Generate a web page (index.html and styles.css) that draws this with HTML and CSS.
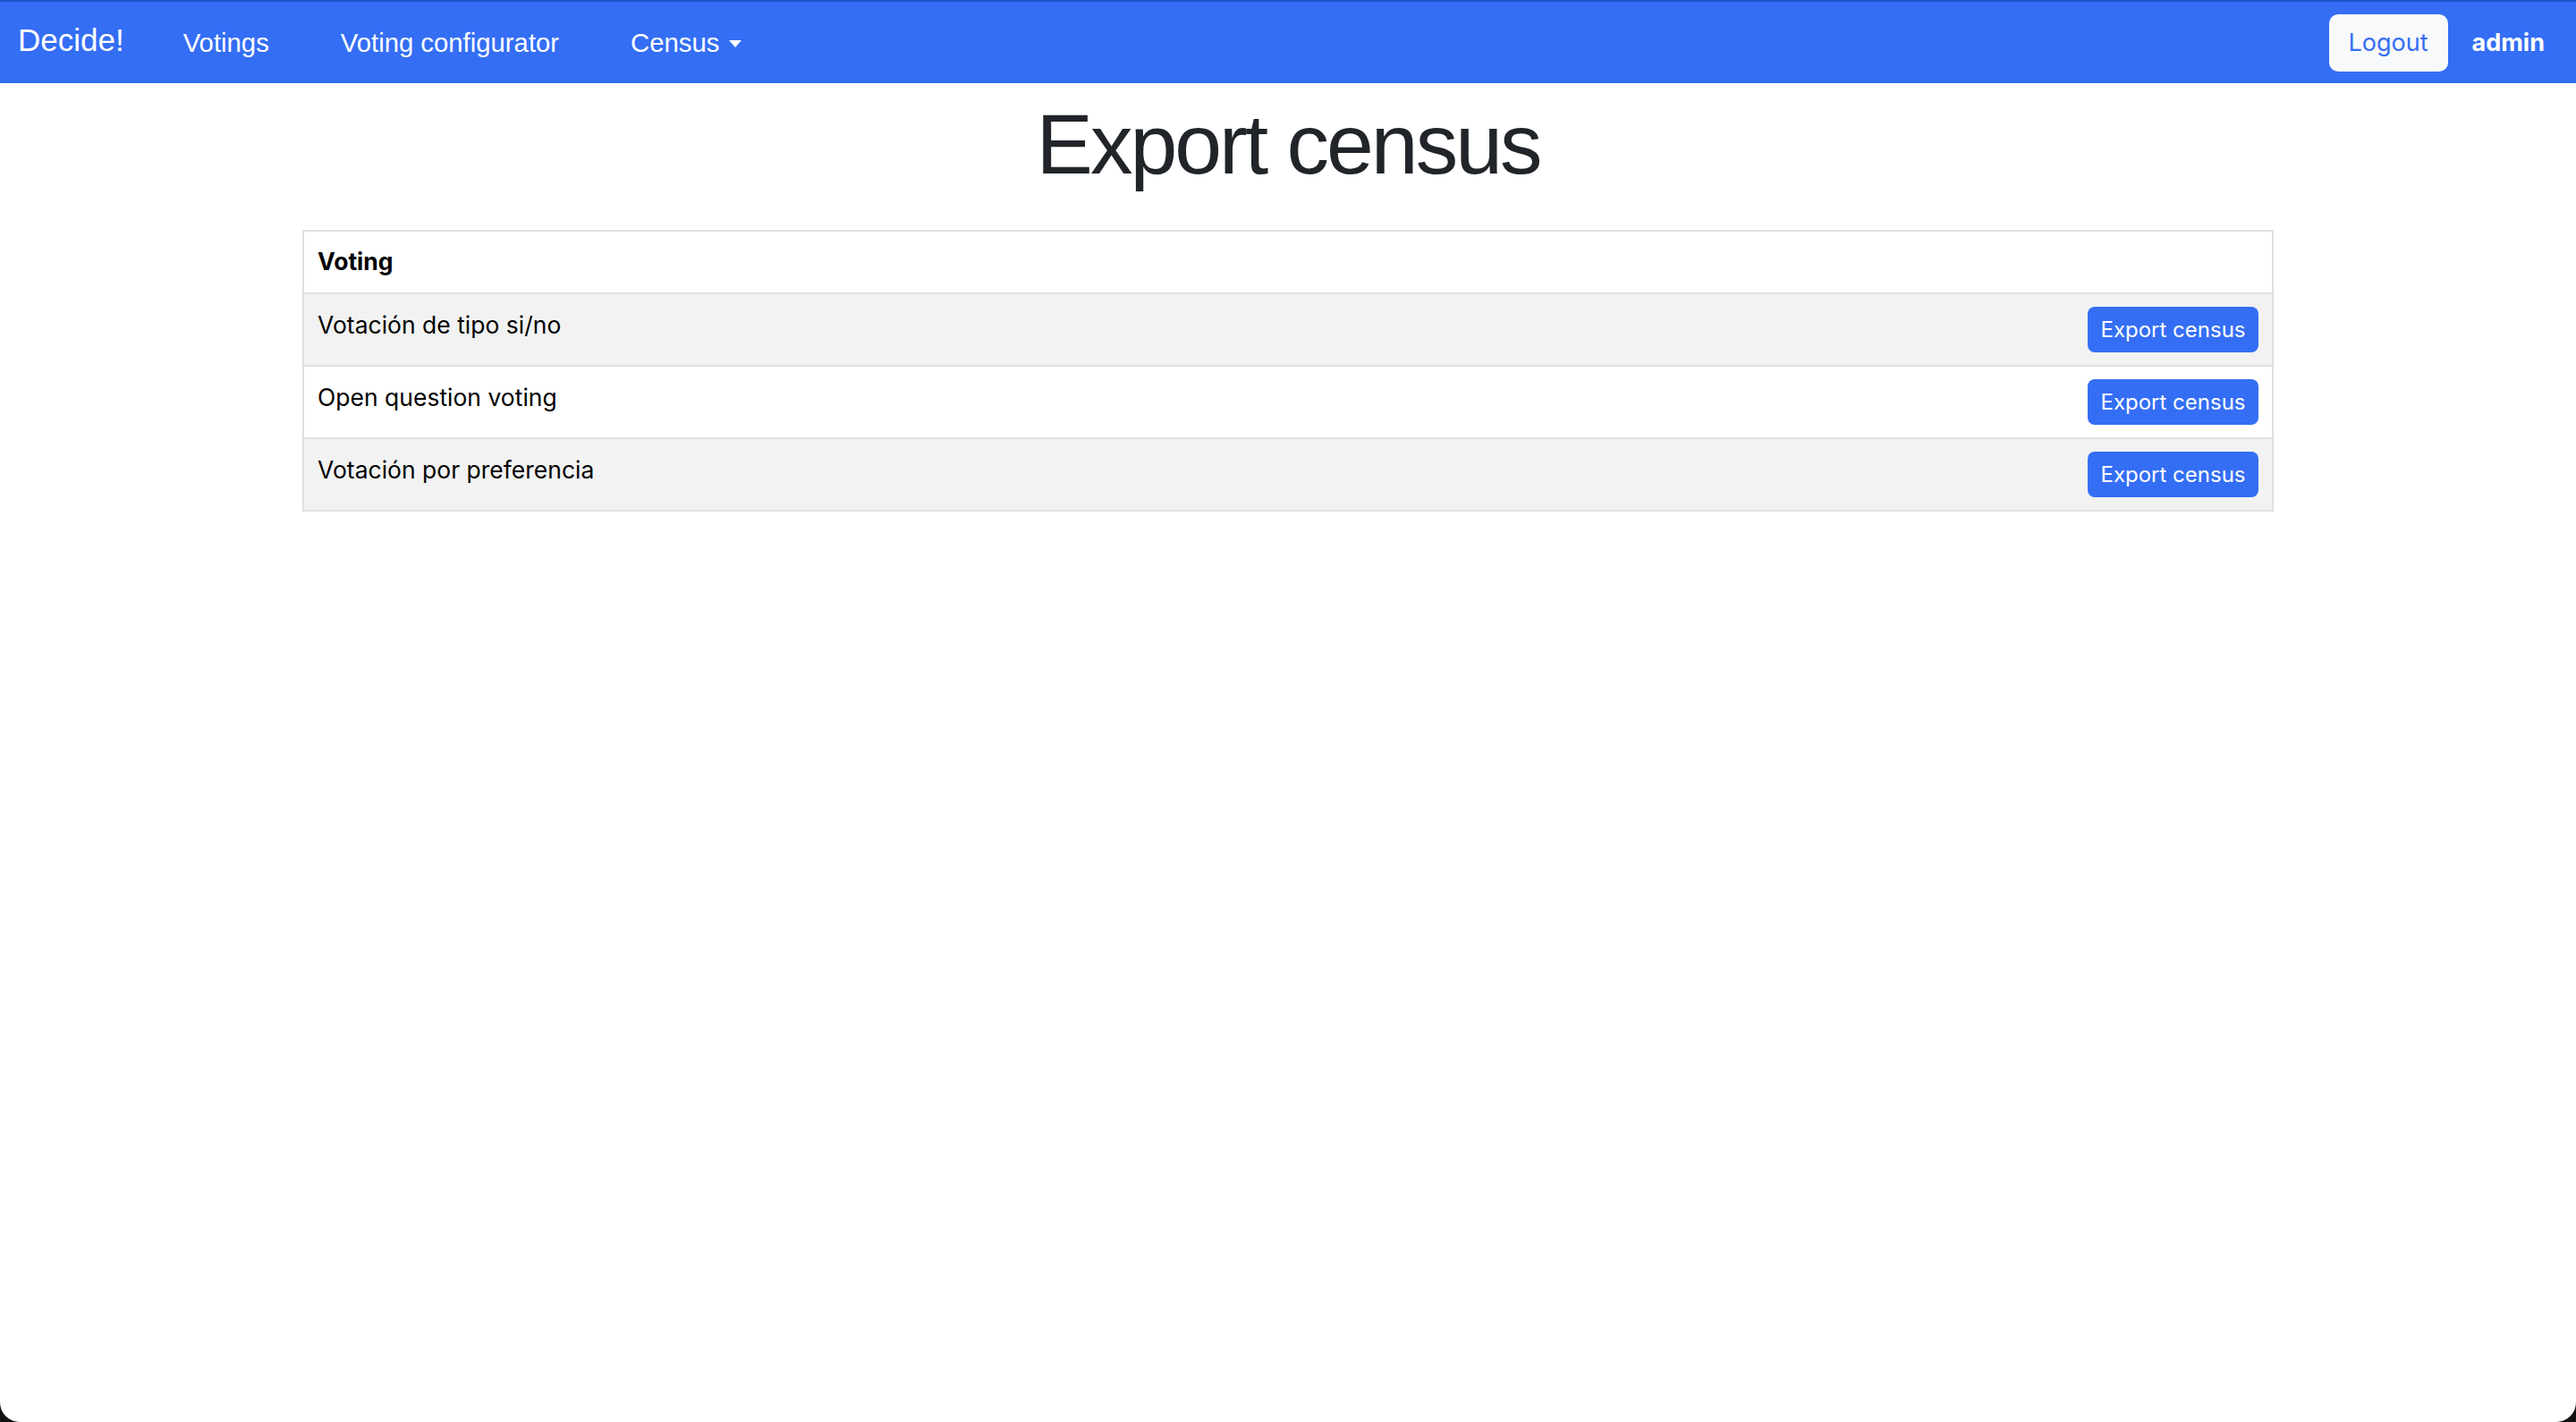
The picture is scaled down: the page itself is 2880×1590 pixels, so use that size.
FILE: index.html
```html
<!DOCTYPE html>
<html lang="es">
<head>
<meta charset="utf-8">
<title>Export census</title>
<link rel="stylesheet" href="styles.css">
</head>
<body>
<div class="window">
  <nav class="navbar">
    <div class="nav-left">
      <a class="brand" href="#">Decide!</a>
      <a class="nav-link" href="#">Votings</a>
      <a class="nav-link" href="#">Voting configurator</a>
      <a class="nav-link" href="#">Census<span class="caret"></span></a>
    </div>
    <div class="nav-right">
      <button class="btn-logout">Logout</button>
      <span class="user">admin</span>
    </div>
  </nav>
  <main class="content">
    <h1 class="title">Export census</h1>
    <table class="table">
      <thead>
        <tr><th>Voting</th><th></th></tr>
      </thead>
      <tbody>
        <tr><td>Votación de tipo si/no</td><td class="actions"><button class="btn-export">Export census</button></td></tr>
        <tr><td>Open question voting</td><td class="actions"><button class="btn-export">Export census</button></td></tr>
        <tr><td>Votación por preferencia</td><td class="actions"><button class="btn-export">Export census</button></td></tr>
      </tbody>
    </table>
  </main>
</div>
</body>
</html>
```

FILE: styles.css
```css
html {
  background: #111;
}
body {
  margin: 0;
}
.window {
  background: #fff;
  min-height: 1590px;
  border-radius: 0 0 22px 22px;
  overflow: hidden;
}
.navbar {
  box-sizing: border-box;
  height: 93px;
  border-top: 2px solid #1d52cc;
  background: #346ef4;
  display: flex;
  align-items: center;
  justify-content: space-between;
  padding: 0 35px 0 20px;
}
.nav-left, .nav-right {
  display: flex;
  align-items: center;
}
.brand {
  font-family: "Liberation Sans", Arial, sans-serif;
  font-size: 35px;
  line-height: 40px;
  color: #fff;
  text-decoration: none;
  margin-right: 26px;
  padding-bottom: 5px;
}
.nav-link {
  font-family: "Liberation Sans", Arial, sans-serif;
  font-size: 29.3px;
  line-height: 40px;
  color: #fff;
  text-decoration: none;
  padding: 0 40px;
  display: flex;
  align-items: center;
}
.caret {
  display: inline-block;
  width: 0;
  height: 0;
  margin-left: 11px;
  margin-top: 2px;
  border-top: 8px solid #fff;
  border-left: 7.5px solid transparent;
  border-right: 7.5px solid transparent;
}
.btn-logout {
  box-sizing: border-box;
  width: 133px;
  height: 64px;
  border: none;
  border-radius: 10px;
  background: #f8f9fa;
  color: #346ef4;
  font-family: Inter, "Noto Sans", sans-serif;
  font-size: 27px;
  padding: 0;
  margin-right: 27px;
}
.user {
  font-family: Inter, "Noto Sans", sans-serif;
  font-weight: 700;
  font-size: 27px;
  color: #fff;
}
.content {
  display: flex;
  flex-direction: column;
  align-items: center;
}
.title {
  margin: 11px 0 0;
  font-family: "Liberation Sans", Arial, sans-serif;
  font-weight: 400;
  font-size: 95px;
  line-height: 114px;
  letter-spacing: -3px;
  color: #212529;
}
.table {
  width: 2204px;
  margin-top: 39px;
  border-collapse: collapse;
  border: 2px solid #dee2e6;
  font-family: Inter, "Noto Sans", sans-serif;
  color: #000;
}
.table th, .table td {
  padding: 13px 15px 13px;
  border-bottom: 2px solid #dee2e6;
  vertical-align: top;
  text-align: left;
  font-size: 26.5px;
  line-height: 42px;
}
.table th {
  font-weight: 700;
  padding: 12px 15px 14px;
}
.table tbody tr:nth-child(odd) {
  background: #f2f2f2;
}
.table td.actions {
  text-align: right;
  padding: 14px 15px 14px;
}
.btn-export {
  box-sizing: border-box;
  width: 191px;
  height: 51px;
  border: none;
  border-radius: 8px;
  background: #346ef4;
  color: #fff;
  font-family: Inter, "Noto Sans", sans-serif;
  font-size: 24px;
  padding: 0;
  display: block;
  margin-left: auto;
}
```
